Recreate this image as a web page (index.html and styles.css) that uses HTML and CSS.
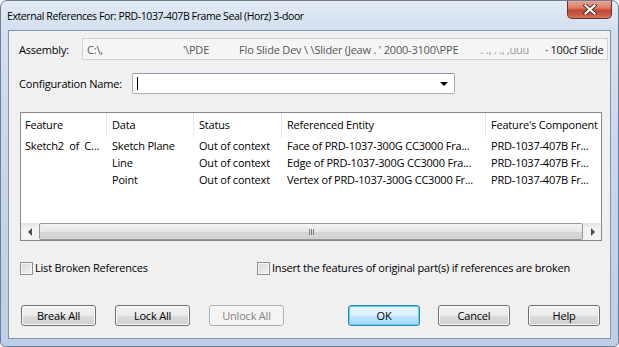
FILE: index.html
```html
<!DOCTYPE html>
<html lang="en">
<head>
    <meta charset="UTF-8">
    <meta name="viewport" content="width=device-width, initial-scale=1.0">
    <title>External References</title>
    <link rel="stylesheet" href="styles.css">
</head>
<body>
    <div class="window">
        <div class="titlebar">
            <span class="title">External References For: PRD-1037-407B Frame Seal (Horz) 3-door</span>
            <div class="close">
                <svg width="14" height="11" viewBox="0 0 14 11">
                    <path d="M2.5 1.5 L11.5 9.5 M11.5 1.5 L2.5 9.5" stroke="#5a2a24" stroke-width="4" stroke-linecap="square"/>
                    <path d="M2.5 1.5 L11.5 9.5 M11.5 1.5 L2.5 9.5" stroke="#fff" stroke-width="2.2" stroke-linecap="square"/>
                </svg>
            </div>
        </div>

        <div class="client">
            <div class="field-row">
                <span class="field-label assembly-label">Assembly:</span>
                <div class="assembly-box">
                    <span class="frag f1">C:\,</span>
                    <span class="frag f2">'\PDE</span>
                    <span class="frag f3">Flo Slide Dev \ \Slider (Jeaw . ' 2000-3100\PPE</span>
                    <span class="frag f4">. ., . ., ‚uuu</span>
                    <span class="frag f5">· 100cf Slide</span>
                </div>
            </div>

            <div class="field-row config-row">
                <span class="field-label config-label">Configuration Name:</span>
                <div class="combo">
                    <span class="caret"></span>
                    <span class="combo-arrow"></span>
                </div>
            </div>

            <div class="list">
                <div class="list-head">
                    <div class="cell first">Feature</div>
                    <div class="cell">Data</div>
                    <div class="cell">Status</div>
                    <div class="cell">Referenced Entity</div>
                    <div class="cell last">Feature's Component</div>
                </div>
                <div class="list-body">
                    <div class="list-row">
                        <div class="cell first">Sketch2&nbsp; of&nbsp; C...</div>
                        <div class="cell">Sketch Plane</div>
                        <div class="cell">Out of context</div>
                        <div class="cell">Face of PRD-1037-300G CC3000 Fra...</div>
                        <div class="cell last">PRD-1037-407B Fr...</div>
                    </div>
                    <div class="list-row">
                        <div class="cell first"></div>
                        <div class="cell">Line</div>
                        <div class="cell">Out of context</div>
                        <div class="cell">Edge of PRD-1037-300G CC3000 Fra...</div>
                        <div class="cell last">PRD-1037-407B Fr...</div>
                    </div>
                    <div class="list-row">
                        <div class="cell first"></div>
                        <div class="cell">Point</div>
                        <div class="cell">Out of context</div>
                        <div class="cell">Vertex of PRD-1037-300G CC3000 Fr...</div>
                        <div class="cell last">PRD-1037-407B Fr...</div>
                    </div>
                </div>
                <div class="hscroll">
                    <div class="sb-btn"><span class="tri-left"></span></div>
                    <div class="sb-track">
                        <div class="sb-thumb"><span class="grip"></span></div>
                    </div>
                    <div class="sb-btn"><span class="tri-right"></span></div>
                </div>
            </div>

            <div class="check-row">
                <label class="check check-broken"><span class="box"></span>List Broken References</label>
                <label class="check"><span class="box"></span>Insert the features of original part(s) if references are broken</label>
            </div>

            <div class="button-row">
                <div class="btn-group">
                    <div class="btn wide">Break All</div>
                    <div class="btn wide">Lock All</div>
                    <div class="btn wide disabled">Unlock All</div>
                </div>
                <div class="btn-group right">
                    <div class="btn default">OK</div>
                    <div class="btn">Cancel</div>
                    <div class="btn">Help</div>
                </div>
            </div>
        </div>
    </div>
</body>
</html>
```

FILE: styles.css
```css
body {
    margin: 0;
    font-family: "Open Sans", "Liberation Sans", sans-serif;
    font-size: 11px;
    letter-spacing: -0.2px;
    color: #000;
    background-color: #fff;
}

.window {
    width: 619px;
    height: 347px;
    box-sizing: border-box;
    border: 1px solid #6e7f94;
    border-radius: 7px 7px 5px 5px;
    background: linear-gradient(to bottom, #e2ebf6 0, #d3e0ef 28px, #c3d5ea 60%, #bccfe6 100%);
    display: flex;
    flex-direction: column;
}

.titlebar {
    height: 29px;
    display: flex;
    align-items: flex-start;
    flex-shrink: 0;
}

.title {
    margin: 7px 0 0 6px;
    line-height: 16px;
    font-size: 10.5px;
    letter-spacing: -0.4px;
}

.close {
    margin-left: auto;
    margin-right: 6px;
    width: 45px;
    height: 18px;
    box-sizing: border-box;
    border: 1px solid #6e3128;
    border-top: none;
    border-radius: 0 0 5px 5px;
    background: linear-gradient(to bottom, #e8a597 0, #d97c68 40%, #c14a33 55%, #c95a43 80%, #d97860 100%);
    display: flex;
    align-items: center;
    justify-content: center;
}

.client {
    flex: 1;
    margin: 0 7px 7px 7px;
    border: 1px solid #8394aa;
    background-color: #f0f0f0;
    padding: 7px 0 0 10px;
}

.field-row {
    display: flex;
    align-items: center;
}

.field-label {
    flex-shrink: 0;
}

.assembly-label {
    width: 63px;
}

.assembly-box {
    width: 526px;
    height: 22px;
    box-sizing: border-box;
    border: 1px solid #cfd3d8;
    background-color: #f5f5f5;
    white-space: nowrap;
    display: flex;
    align-items: center;
}

.frag {
    color: #555;
}

.f1 { margin-left: 4px; }
.f2 { margin-left: 80px; }
.f3 { margin-left: 30px; }
.f4 { margin-left: 22px; color: #999; }
.f5 { margin-left: 16px; color: #111; }

.config-row {
    margin-top: 13px;
}

.config-label {
    width: 113px;
}

.combo {
    width: 323px;
    height: 21px;
    box-sizing: border-box;
    border: 1px solid #abadb3;
    border-top-color: #8e9aaa;
    border-radius: 2px;
    background-color: #fff;
    display: flex;
    align-items: center;
}

.caret {
    margin-left: 4px;
    width: 1px;
    height: 13px;
    background-color: #000;
}

.combo-arrow {
    margin-left: auto;
    margin-right: 6px;
    width: 0;
    height: 0;
    border-left: 4px solid transparent;
    border-right: 4px solid transparent;
    border-top: 4px solid #000;
}

.list {
    margin: 18px 0 0 1px;
    width: 582px;
    height: 129px;
    box-sizing: border-box;
    border: 1px solid #828790;
    background-color: #fff;
    display: flex;
    flex-direction: column;
    overflow: hidden;
}

.list-head,
.list-row {
    display: grid;
    grid-template-columns: 86px 87px 88px 204px 1fr;
}

.list-head {
    height: 24px;
    flex-shrink: 0;
}

.list-head .cell {
    border-right: 1px solid #e3e6ea;
    line-height: 24px;
}

.list-head .cell.last {
    border-right: none;
}

.cell {
    padding-left: 5px;
    white-space: nowrap;
    overflow: hidden;
}

.cell.first {
    padding-left: 4px;
}

.list-body {
    flex: 1;
}

.list-row {
    height: 17px;
    line-height: 17px;
}

.hscroll {
    height: 17px;
    flex-shrink: 0;
    display: flex;
    background: linear-gradient(to bottom, #e3e3e3, #f2f2f2 30%, #f2f2f2);
}

.sb-btn {
    width: 17px;
    display: flex;
    align-items: center;
    justify-content: center;
}

.tri-left {
    width: 0;
    height: 0;
    border-top: 4px solid transparent;
    border-bottom: 4px solid transparent;
    border-right: 4px solid #4d4d4d;
}

.tri-right {
    width: 0;
    height: 0;
    border-top: 4px solid transparent;
    border-bottom: 4px solid transparent;
    border-left: 4px solid #4d4d4d;
}

.sb-track {
    flex: 1;
    padding: 0 1px;
    display: flex;
}

.sb-thumb {
    flex: 1;
    box-sizing: border-box;
    border: 1px solid #979797;
    border-radius: 2px;
    background: linear-gradient(to bottom, #f4f4f4, #e6e6e6 50%, #d6d6d6 51%, #d3d3d3);
    display: flex;
    align-items: center;
    justify-content: center;
}

.grip {
    width: 5px;
    height: 6px;
    background: repeating-linear-gradient(to right, #7b7b7b 0, #7b7b7b 1px, transparent 1px, transparent 2px);
}

.check-row {
    margin: 20px 0 0 1px;
    display: flex;
    align-items: center;
}

.check {
    display: flex;
    align-items: center;
    line-height: 14px;
}

.check-broken {
    width: 237px;
}

.box {
    width: 13px;
    height: 13px;
    box-sizing: border-box;
    border: 1px solid #8e8f8f;
    background: linear-gradient(135deg, #d6d6d6, #f4f4f4);
    box-shadow: inset 0 0 0 1px #f6f6f6;
    margin-right: 2px;
}

.button-row {
    margin: 30px 0 0 2px;
    width: 579px;
    display: flex;
    justify-content: space-between;
}

.btn-group {
    display: flex;
    gap: 19px;
}

.btn-group.right {
    gap: 18px;
}

.btn {
    width: 72px;
    height: 21px;
    box-sizing: border-box;
    border: 1px solid #707070;
    border-radius: 3px;
    background: linear-gradient(to bottom, #f2f2f2 0, #ebebeb 50%, #dddddd 51%, #cfcfcf 100%);
    box-shadow: inset 0 0 0 1px #fcfcfc;
    display: flex;
    align-items: center;
    justify-content: center;
}

.btn.wide {
    width: 75px;
}

.btn.default {
    border-color: #3c7fb1;
    box-shadow: inset 0 0 0 1px #48d7fb;
    background: linear-gradient(to bottom, #eaf6fd 0, #d9f0fc 50%, #bee6fd 51%, #a7d9f5 100%);
}

.btn.disabled {
    border-color: #adb2b5;
    background: #f4f4f4;
    box-shadow: none;
    color: #838383;
}
```
